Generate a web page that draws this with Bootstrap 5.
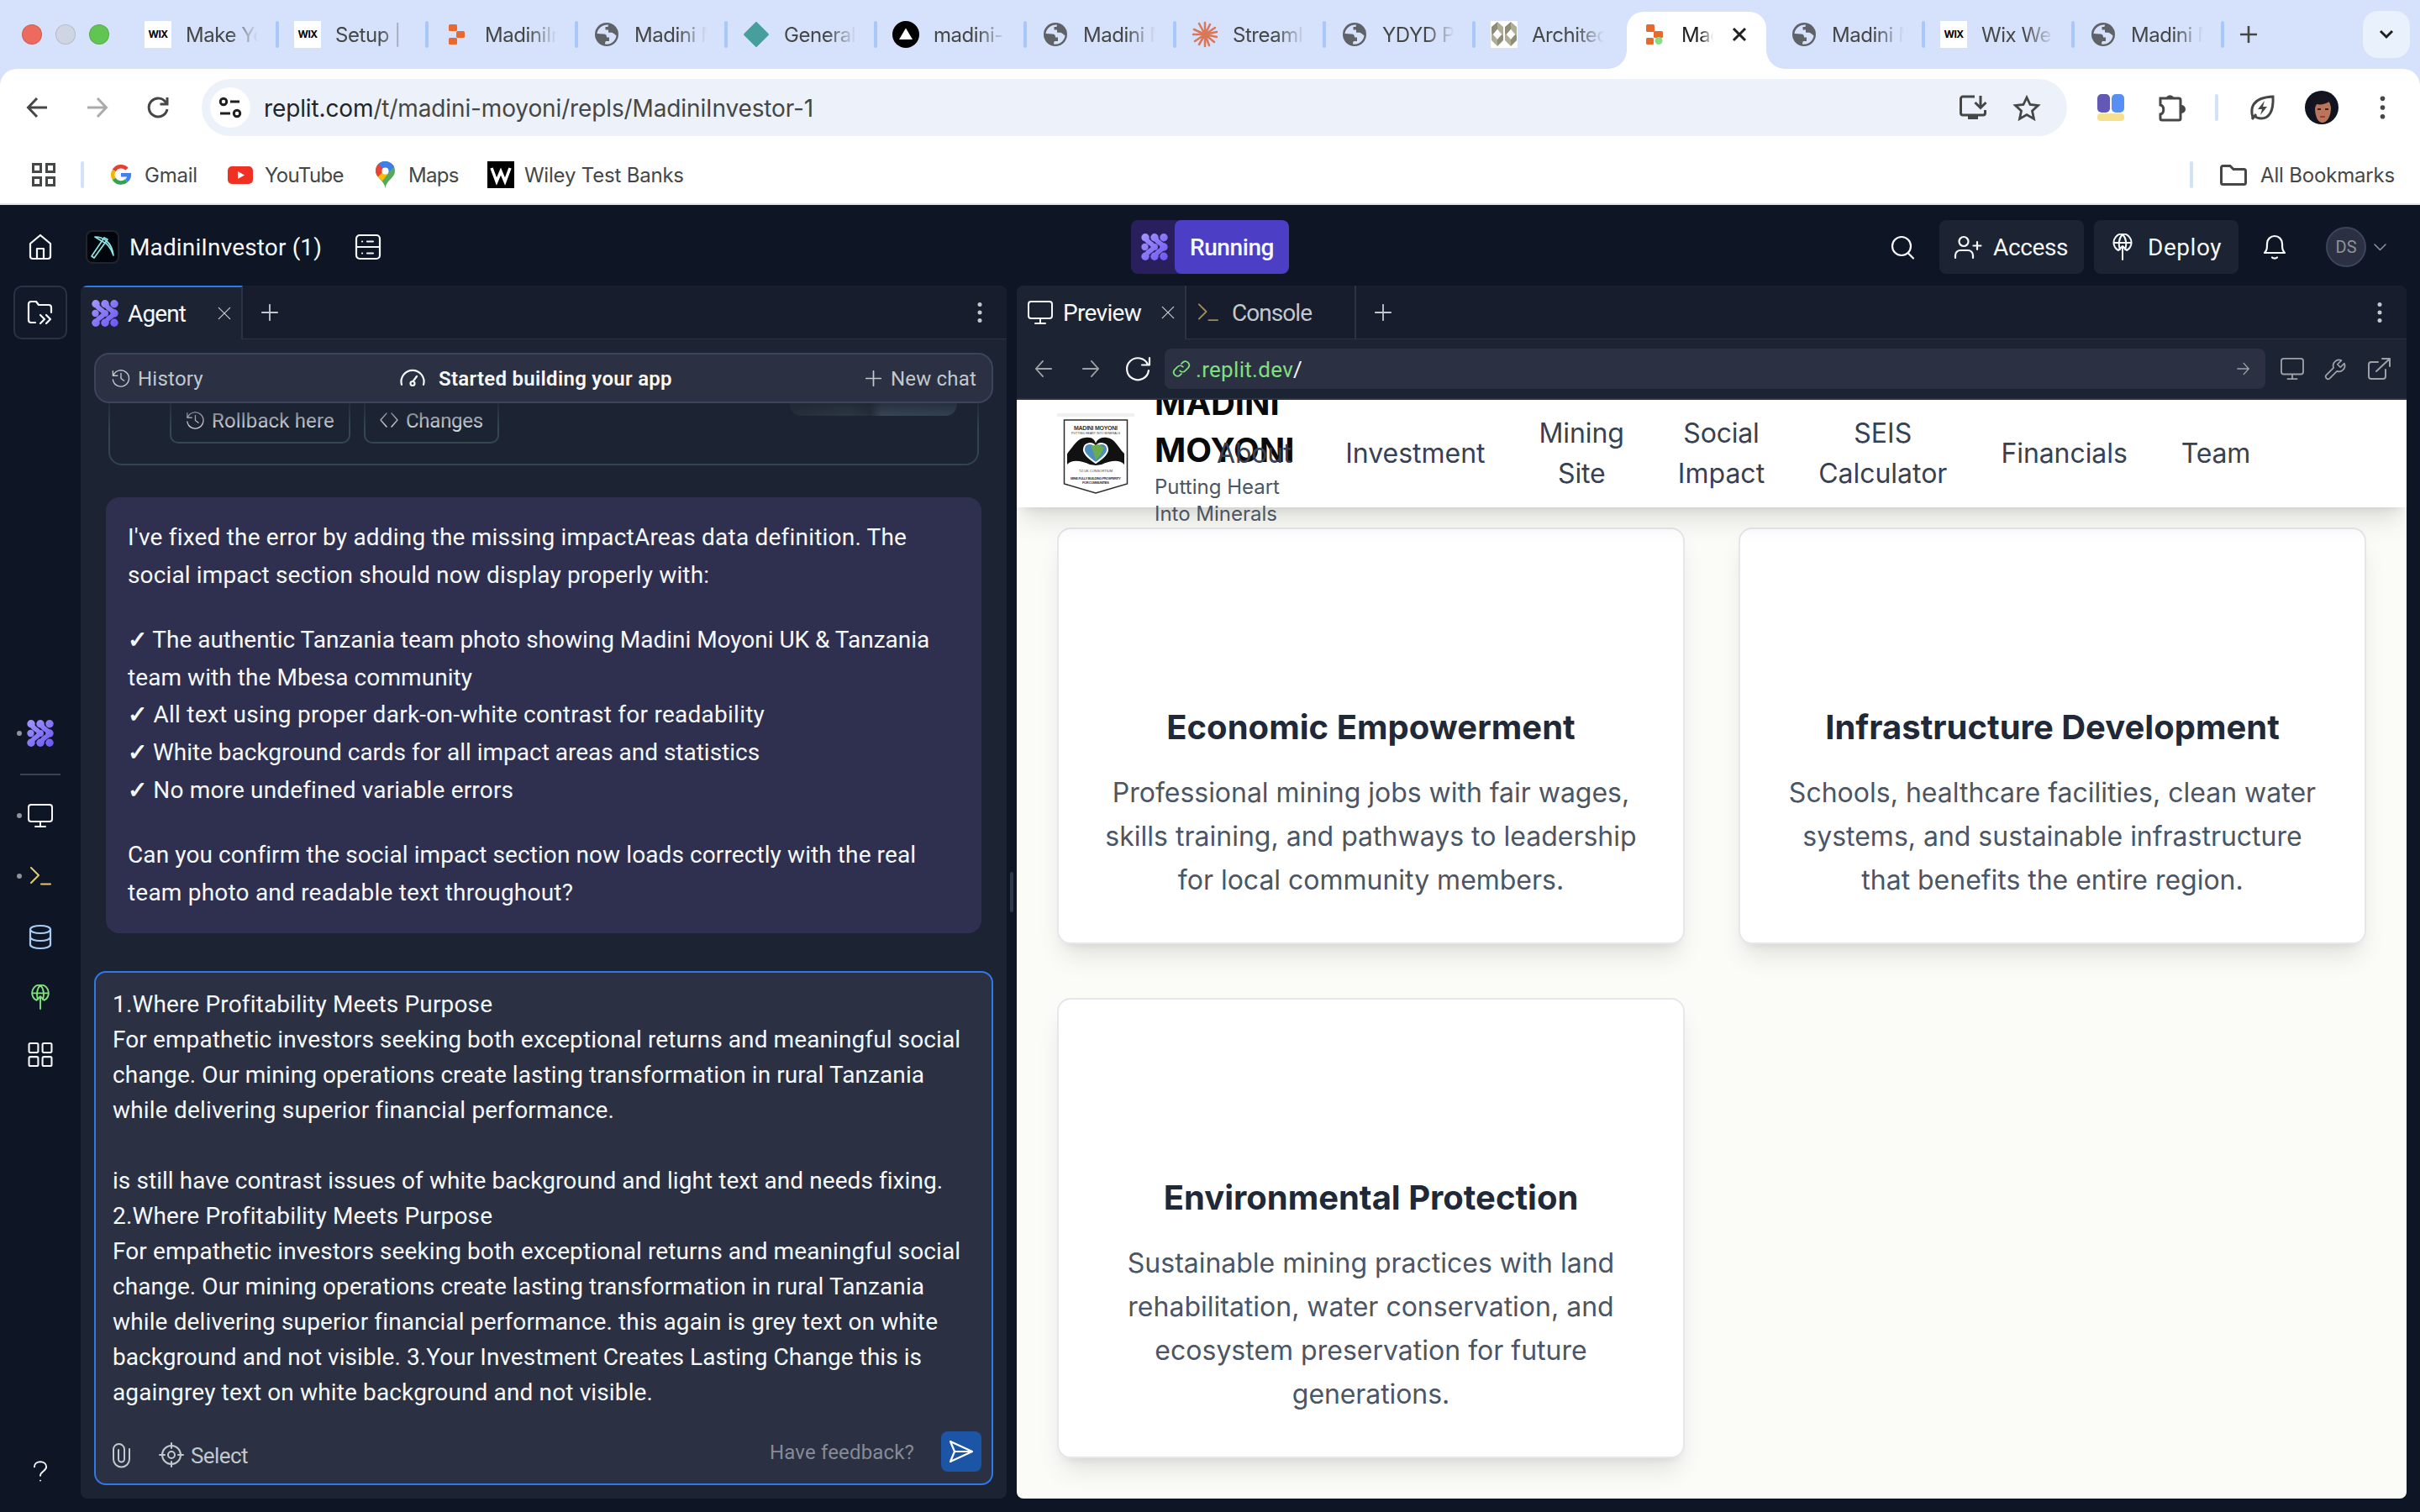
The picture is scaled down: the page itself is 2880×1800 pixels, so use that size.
<!DOCTYPE html>
<html lang="en">
<head>
<meta charset="utf-8">
<title>MadiniInvestor (1) - Replit</title>
<link href="https://cdn.jsdelivr.net/npm/bootstrap@5.3.0/dist/css/bootstrap.min.css" rel="stylesheet">
<script src="https://cdn.jsdelivr.net/npm/bootstrap@5.3.0/dist/js/bootstrap.bundle.min.js"></script>
<style>
:root{--root:#0e1525;--tabs:#171d2d;--pane:#1c2333;--raised:#2b3043;--line:#2b3245;--dim:#9da2a6;--soft:#c2c8cc;--txt:#f5f9fc;--blue:#2e79e5}
html,body{width:2880px;height:1800px;overflow:hidden}
body{background:var(--root);color:var(--txt);font-family:Roboto,"Noto Sans",sans-serif;font-size:28px;line-height:1.5}
svg{display:block;flex:none;overflow:visible}
.ln{fill:none;stroke:currentColor;stroke-width:1.5;stroke-linecap:round;stroke-linejoin:round}
.s2{stroke-width:2}.s22{stroke-width:2.2}
[data-w]{white-space:nowrap;display:inline-block}
.d-flex>[data-w],.btab .ttl{padding-top:2px}
p{margin:0}
/* left-margin steps */
.x6{margin-left:6px}.x9{margin-left:9px}.x11{margin-left:11px}.x12{margin-left:12px}.x14{margin-left:14px}.x16{margin-left:16px}.x17{margin-left:17px}.x18{margin-left:18px}.x20{margin-left:20px}.x22{margin-left:22px}.x24{margin-left:24px}.x30{margin-left:30px}.x32{margin-left:32px}.x34{margin-left:34px}.x36{margin-left:36px}.x38{margin-left:38px}.x40{margin-left:40px}.x42{margin-left:42px}.x48{margin-left:48px}
.tx{color:var(--txt)}.sf{color:var(--soft)}
/* browser chrome */
.chrome-ui{font-family:Inter,sans-serif;font-size:24px;color:#454746;background:#fff}
.strip,.barwrap{background:#d6e2fb}
.strip{height:82px}
.strip .light{width:24px;height:24px;margin-right:16px;border:1px solid rgba(0,0,0,.12)}
.lt-r{background:#ed6a5e}.lt-y{background:#cfd5e2}.lt-g{background:#61c554}
.lights{padding-left:26px;width:156px}
.btab{width:178px;height:82px;padding-left:16px}
.btab .fav{width:32px;height:32px;margin-right:17px}
.btab .ttl{width:86px;margin-right:21px;overflow:hidden;white-space:nowrap;letter-spacing:-.45px;-webkit-mask-image:linear-gradient(90deg,#000 60%,transparent 100%);mask-image:linear-gradient(90deg,#000 60%,transparent 100%)}
.vsep{width:4px;height:32px;border-radius:2px;background:#a8c7fa;flex:none}
.vpale{background:#d3e1fa}
.wixf{background:#fff;color:#000;font-size:12px;font-weight:700;display:flex;align-items:center;justify-content:center;letter-spacing:-.6px}
.btab.on{width:166px;height:68px;margin:14px 0 0;background:#fff;border-radius:20px 20px 0 0;padding:0 0 14px 20px;position:relative;color:#1f1f1f}
.btab.on::before,.btab.on::after{content:"";position:absolute;bottom:0;width:22px;height:22px}
.btab.on::before{left:-22px;background:radial-gradient(circle at 0 0,transparent 21.5px,#fff 22px)}
.btab.on::after{right:-22px;background:radial-gradient(circle at 100% 0,transparent 21.5px,#fff 22px)}
.btab.on .fav{margin-right:13px}.btab.on .ttl{width:38px;margin-right:23px}
.after-on{margin-left:13px}
.menu-btn{width:56px;height:56px;border-radius:18px;background:#e9f1fd;margin-left:auto;margin-right:12px}
.bar{height:92px;background:#fff;border-radius:20px 20px 0 0;padding-left:32px;padding-right:24px}
.omni{width:2220px;height:68px;border-radius:34px;background:#ecf1fa;margin-left:40px;padding:0 32px 0 10px;font-size:28px}
.omni .site{width:48px;height:48px;margin-right:16px}
.navi{gap:48px}
.marks{height:70px;padding:0 30px 0 38px;border-bottom:2px solid #e1e4e1}
.marks .vsep{background:#d3e1fa}
/* workspace */
.top{height:96px;padding-top:4px}
.tbtn{height:64px;width:172px;border-radius:8px;background:var(--pane)}
.ava{width:48px;height:48px;background:var(--raised);border:2px solid #3c445c;font-size:20px;color:#8f949c}
.run-a{width:188px;height:64px;border-radius:8px;background:#281f5c;overflow:hidden;margin-top:2px}
.run-i{width:52px;padding-left:12px}
.run-b{width:136px;border-radius:8px;background:#4c3fc5;font-weight:500}
.rail{width:96px;color:var(--txt)}
.rail .files{width:64px;height:64px;border:2px solid var(--line);border-radius:10px;margin:0 0 433px 16px;background:#121929}
.rail .it{height:72px;position:relative;width:96px}
.rail .it.run::before{content:"";position:absolute;left:20px;top:33px;width:6px;height:6px;border-radius:50%;background:#8f949c}
.rail hr{width:48px;margin:12px 0 12px 24px;border-top:2px solid #3a4154;opacity:1}
.rail .grid-it{height:64px}.rail .help-it{margin-bottom:13px}
.c-yel{color:#e3ca6e}.c-sky{color:#a8cdf5}.c-grn{color:#80e07f}.c-olive{color:#9c8c56}.c-mute{color:#8f949c}
.gutter{width:12px}.gutter i{width:4px;height:48px;border-radius:2px;background:#2f374a;margin-top:698px;margin-left:4px;display:block}
.pane{border-radius:8px;background:var(--pane);overflow:hidden;height:1444px}
.pane-l{width:1102px}.pane-r{width:1654px}
.ptabs{height:64px;background:var(--tabs)}
.ptab{height:64px;width:202px;border-right:2px solid var(--line);border-bottom:1px solid var(--line);color:var(--soft);padding-left:13px}
.ptab.on{background:var(--pane);color:var(--txt);border-bottom:0}
.ptab.focus{width:193px;border-top:2px solid var(--blue)}
.rest{border-bottom:1px solid var(--line);padding:0 28px 0 22px;color:var(--soft)}
.chat{height:1380px;padding:16px}
.hist{height:60px;border:2px solid #3c445c;border-radius:18px;background:var(--raised);font-size:24px;color:var(--soft);position:relative;z-index:2;padding:0 18px}
.gauge{margin-left:234px}
.past{height:74px;margin:0 17px;border:2px solid #2f4550;border-top:0;border-radius:0 0 16px 16px;padding:0 24px 0 71px;position:relative}
.past::after{content:"";position:absolute;left:-4px;right:-4px;top:0;height:30px;background:linear-gradient(#1c2333c0,#1c233300)}
.act{height:48px;border:2px solid #33484f;border-top:0;border-radius:0 0 10px 10px;font-size:24px;color:#d3d8dd;padding:12px 17px 18px;gap:9px}
.act-a{width:215px}.act-b{width:161px}
.thumbpic{width:199px;height:15px;border-radius:0 0 14px 14px;background:linear-gradient(90deg,#2b3440,#36424c 35%,#2a333e 48%,#4a5a68 55%,#3f5160)}
.msg{width:1042px;height:519px;margin:38px 0 0 14px;border-radius:16px;background:#2f3050;padding:26px;line-height:44.85px}
.gap32{margin-top:32px}
.composer{height:612px;margin-top:45px;border:2px solid var(--blue);border-radius:14px;background:var(--raised);padding:17px 12px 16px 20px;line-height:42px}
.draft{min-height:504px;margin-bottom:23px}
.tools{margin-top:8px}
.tools-sel{font-size:26px}.fb{font-size:24px;color:#868b96}
.send{width:48px;height:48px;border-radius:8px;background:#1c55a5;color:#fff}
.urlbar{height:72px;border-bottom:2px solid var(--line);color:var(--dim);padding-left:20px}
.urlf{width:1310px;height:48px;border-radius:8px;background:var(--raised);padding:0 18px 0 9px;font-size:26px}
.slash{padding-top:2px}
/* previewed site */
.site-view{height:1308px;background:#fbfcf8;font-family:Inter,sans-serif;overflow:hidden}
.site-head{height:128px;background:#fff;padding-left:48px;position:relative;z-index:2;box-shadow:0 20px 30px -6px rgba(0,0,0,.12),0 8px 12px -8px rgba(0,0,0,.12)}
.brandbox{width:190px;flex:none;gap:24px}
.brandname{font-weight:700;font-size:40px;line-height:56px;color:#0a0a0a}
.tagline{font-size:24px;line-height:32px;color:#4b5563}
.sitenav{gap:64px;font-size:32px;line-height:48px;color:#374151;text-align:center;position:relative}
.sitenav>[data-w]{padding-top:0}
.cards{padding:24px 48px;gap:64px;display:grid;grid-template-columns:1fr 1fr}
.pcard{border:2px solid #e5e7eb;border-radius:16px;background:#fff;padding:48px 40px;text-align:center;box-shadow:0 20px 30px -6px rgba(0,0,0,.1),0 8px 12px -8px rgba(0,0,0,.1)}
.pcard .slot{height:128px;margin-bottom:32px}
.pcard h3{font-size:40px;line-height:56px;font-weight:700;color:#1f2937;margin:0 0 24px}
.pcard p{font-size:32px;line-height:52px;color:#4b5563}
</style>
</head>
<body class="d-flex flex-column">
<svg width="0" height="0" class="position-absolute" aria-hidden="true">
<defs>
<linearGradient id="vio" gradientUnits="userSpaceOnUse" x1="0" y1="0" x2="32" y2="32"><stop offset="0" stop-color="#a597ff"/><stop offset="1" stop-color="#6a55f0"/></linearGradient>
<symbol id="globe" viewBox="0 0 32 32"><circle cx="16" cy="16" r="14" fill="#5f6368"/><path d="M18 4.5C11 4 5.500 8.500 4.500 15l8 .5c2.500 0 3.500 1.500 3.500 4h3v4.500h-4c-1 1.500-1 2.500-1 3.500 7 1 12.500-3.500 13.500-10l-4-4h-5v-3h-4V7h3z" fill="#d6e2fb"/><path d="M21 5.500v4h-3v4h4l5 3c.5-5-2-9-6-11zM13 18H4.500c.5 4 3.500 8 8 9.300V23l3-1.500z" fill="#5f6368"/></symbol>
<symbol id="replit" viewBox="0 0 32 32"><g fill="#e8692b"><rect x="6" y="4" width="10" height="8" rx="1.500"/><rect x="15" y="12" width="10" height="8" rx="1.500"/><rect x="6" y="20" width="10" height="8" rx="1.500"/></g></symbol>
<symbol id="agent" viewBox="0 0 32 32"><g fill="url(#vio)"><circle cx="5" cy="4.800" r="4.700"/><circle cx="16" cy="4.800" r="4.700"/><circle cx="27" cy="4.800" r="4.700"/><circle cx="4.500" cy="16" r="4.200"/><circle cx="16" cy="16" r="4"/><circle cx="27" cy="16" r="4.700"/><circle cx="5" cy="27.200" r="4.700"/><circle cx="16" cy="27.200" r="4.700"/><circle cx="27" cy="27.200" r="4.700"/></g><g fill="none" stroke="url(#vio)" stroke-width="5.600"><path d="M6 6C8 12 14.500 11.500 14.500 16S8 20 6 26M17.500 6C19.500 12 26 11.500 26 16s-6.500 4-8.500 10"/></g></symbol>
<symbol id="close" viewBox="0 0 24 24"><path class="ln" d="M4 4l16 16M20 4L4 20"/></symbol>
<symbol id="plus" viewBox="0 0 24 24"><path class="ln s22" d="M12 1v22M1 12h22"/></symbol>
<symbol id="left" viewBox="0 0 24 24"><path class="ln s2" d="M22 12H2M11 2L2 12l9 10"/></symbol>
<symbol id="right" viewBox="0 0 24 24"><path class="ln s2" d="M2 12h20M13 2l9 10-9 10"/></symbol>
<symbol id="kebab" viewBox="0 0 8 24"><g fill="currentColor"><circle cx="4" cy="2.500" r="2.500"/><circle cx="4" cy="12" r="2.500"/><circle cx="4" cy="21.500" r="2.500"/></g></symbol>
<symbol id="monitor" viewBox="0 0 30 28"><path class="ln s2" d="M4 1h22a3 3 0 0 1 3 3v14a3 3 0 0 1-3 3H4a3 3 0 0 1-3-3V4a3 3 0 0 1 3-3zM15 21v6M9 27h12"/></symbol>
<symbol id="prompt" viewBox="0 0 26 22"><path class="ln s2" d="M2 1l9 9-9 9M14 20.500h11"/></symbol>
<symbol id="history" viewBox="0 0 24 24"><path class="ln" d="M2 3v6h6M2.500 9A10.500 10.500 0 1 1 2 14M12.500 6v6.500l4 3"/></symbol>
<symbol id="deploy" viewBox="0 0 24 32"><path class="ln s2" d="M7 20A10.500 10.500 0 1 1 17 20M2 11h20M12 1c-5 5-5 13-3 18M12 1c5 5 5 13 3 18M12 31V15M7 20l5-5 5 5"/></symbol>
<symbol id="fourbox" viewBox="0 0 28 28"><g class="ln s2"><rect x="1" y="1" width="10.500" height="10.500" rx="1.500"/><rect x="16.500" y="1" width="10.500" height="10.500" rx="1.500"/><rect x="1" y="16.500" width="10.500" height="10.500" rx="1.500"/><rect x="16.500" y="16.500" width="10.500" height="10.500" rx="1.500"/></g></symbol>
</defs>
</svg>

<header class="chrome-ui">
  <div class="strip d-flex align-items-center">
    <div class="lights d-flex"><span class="light lt-r rounded-circle"></span><span class="light lt-y rounded-circle"></span><span class="light lt-g rounded-circle"></span></div>
    <div class="btab d-flex align-items-center"><span class="fav wixf">WIX</span><span class="ttl">Make Yo</span><i class="vsep"></i></div>
    <div class="btab d-flex align-items-center"><span class="fav wixf">WIX</span><span class="ttl">Setup | </span><i class="vsep"></i></div>
    <div class="btab d-flex align-items-center"><svg class="fav"><use href="#replit"/></svg><span class="ttl">MadiniIn</span><i class="vsep"></i></div>
    <div class="btab d-flex align-items-center"><svg class="fav"><use href="#globe"/></svg><span class="ttl">Madini M</span><i class="vsep"></i></div>
    <div class="btab d-flex align-items-center"><svg class="fav" viewBox="0 0 32 32"><path d="M16 2l14 14-14 14L2 16z" fill="#479f9c" stroke="#479f9c" stroke-width="2" stroke-linejoin="round"/></svg><span class="ttl">General</span><i class="vsep"></i></div>
    <div class="btab d-flex align-items-center"><svg class="fav" viewBox="0 0 32 32"><circle cx="16" cy="16" r="16"/><path d="M16 8.500l8 13.500H8z" fill="#fff"/></svg><span class="ttl">madini-</span><i class="vsep"></i></div>
    <div class="btab d-flex align-items-center"><svg class="fav"><use href="#globe"/></svg><span class="ttl">Madini M</span><i class="vsep"></i></div>
    <div class="btab d-flex align-items-center"><svg class="fav" viewBox="0 0 32 32"><g stroke="#d97757" stroke-width="2.500" stroke-linecap="round"><path d="M16 16V2M16 16l6-12M16 16l12-8M16 16l14-3M16 16l14 3M16 16l11 9M16 16l5 13M16 16v14M16 16L9 28M16 16L4 24M16 16H2M16 16L3 10M16 16L9 3"/></g></svg><span class="ttl">Streaml</span><i class="vsep"></i></div>
    <div class="btab d-flex align-items-center"><svg class="fav"><use href="#globe"/></svg><span class="ttl">YDYD P</span><i class="vsep"></i></div>
    <div class="btab d-flex align-items-center"><svg class="fav" viewBox="0 0 32 32"><path fill="#fff" d="M0 0h32v32H0z"/><path d="M1 7l7-6v9l-7 8zM17 7l7-6v9l-7 8zM15 23l-7 7v-9l7-7zM31 23l-7 7v-9l7-7z" fill="#8e8e78"/><path d="M15 7L8 1v9l7 8zM31 7l-7-6v9l7 8zM1 23l7 7v-9l-7-7zM17 23l7 7v-9l-7-7z" fill="#aeae98"/><path d="M8 10l5 6-5 6-5-6zM24 10l5 6-5 6-5-6z" fill="#fff"/></svg><span class="ttl">Architec</span></div>
    <div class="btab on d-flex align-items-center"><svg class="fav" viewBox="0 0 32 32"><g fill="#e8692b"><rect x="3" y="4" width="10" height="9" rx="1.500"/><rect x="12" y="12" width="11" height="8" rx="1.500"/><rect x="3" y="20" width="9" height="8" rx="1.500"/></g><circle cx="18" cy="23.500" r="4.500" fill="#86dd8c"/></svg><span class="ttl">Mad</span><svg width="16" height="16"><path d="M1 1l14 14M15 1L1 15" stroke="#1f1f1f" stroke-width="3" fill="none"/></svg></div>
    <div class="btab after-on d-flex align-items-center"><svg class="fav"><use href="#globe"/></svg><span class="ttl">Madini M</span><i class="vsep"></i></div>
    <div class="btab d-flex align-items-center"><span class="fav wixf">WIX</span><span class="ttl">Wix We</span><i class="vsep"></i></div>
    <div class="btab d-flex align-items-center"><svg class="fav"><use href="#globe"/></svg><span class="ttl">Madini M</span><i class="vsep"></i></div>
    <svg class="x17" width="20" height="20" viewBox="0 0 20 20"><path d="M10 0v20M0 10h20" stroke="#454746" stroke-width="2.600"/></svg>
    <div class="menu-btn d-flex align-items-center justify-content-center"><svg width="16" height="10" viewBox="0 0 16 10"><path d="M1 1l7 7 7-7" fill="none" stroke="#1f1f1f" stroke-width="3"/></svg></div>
  </div>
  <div class="barwrap">
  <div class="bar d-flex align-items-center">
    <div class="navi d-flex align-items-center">
      <svg width="24" height="24" viewBox="0 0 24 24"><path d="M24 12H2M12 1L1.500 12 12 23" fill="none" stroke="#454746" stroke-width="3"/></svg>
      <svg width="24" height="24" viewBox="0 0 24 24"><path d="M0 12h22M12 1l10.500 11L12 23" fill="none" stroke="#aaabab" stroke-width="3"/></svg>
      <svg width="24" height="24" viewBox="0 0 24 24"><path d="M22 7A11 11 0 1 0 23 14M23 0v8h-8.500" fill="none" stroke="#454746" stroke-width="3"/></svg>
    </div>
    <div class="omni d-flex align-items-center">
      <span class="site bg-white rounded-circle d-flex align-items-center justify-content-center"><svg width="26" height="24" viewBox="0 0 26 24"><g fill="none" stroke="#1f1f1f" stroke-width="3"><circle cx="5" cy="5" r="3.700"/><path d="M13 5h11M1 19h12"/><circle cx="21" cy="19" r="3.700"/></g></svg></span>
      <span data-w="653"><span class="text-dark">replit.com</span>/t/madini-moyoni/repls/MadiniInvestor-1</span>
      <svg class="ms-auto" width="32" height="30" viewBox="0 0 32 30"><path d="M18 2H4a2.500 2.500 0 0 0-2.500 2.500v17A2.500 2.500 0 0 0 4 24h24a2.500 2.500 0 0 0 2.500-2.500V18M25 1v14M18.500 9l6.500 6.500L31.500 9" fill="none" stroke="#454746" stroke-width="3"/><path d="M10 24h12v5H10z" fill="#454746"/></svg>
      <svg class="x32" width="32" height="30" viewBox="0 0 32 30"><path d="M16 3l4 8.500 9.500 1-7 6.500 2 9.500L16 23.500 7.500 28.500l2-9.500-7-6.500 9.500-1z" fill="none" stroke="#454746" stroke-width="2.800"/></svg>
    </div>
    <svg class="x36" width="32" height="32" viewBox="0 0 32 32"><rect width="15" height="22" rx="5" fill="#6258b5"/><rect x="17" width="15" height="22" rx="5" fill="#5690f5"/><rect y="23" width="32" height="9" rx="4" fill="#f7e08d"/></svg>
    <svg class="x40" width="34" height="34" viewBox="0 0 34 34"><path d="M3 6h22a2 2 0 0 1 2 2v22a2 2 0 0 1-2 2H5a2 2 0 0 1-2-2v-5c5-1 5-10 0-11z" fill="none" stroke="#454746" stroke-width="3"/><path d="M10 5a5 5 0 0 1 9 0zM28 14a5 5 0 0 1 0 10z" fill="#454746"/></svg>
    <i class="vsep vpale x34"></i>
    <svg class="x38" width="29" height="30" viewBox="0 0 29 30"><path d="M3 27C0 17 1 3 27 2c1 18-5 26-14 26-3 0-6-1-8-3M2 29l5-6" fill="none" stroke="#454746" stroke-width="3"/><path d="M17 7l-8 10h5l-2 7 8-10h-5z" fill="#454746"/></svg>
    <svg class="x36" width="40" height="40" viewBox="0 0 40 40"><circle cx="20" cy="20" r="20" fill="#101420"/><path d="M12 20c0-8 4-11 9-11s10 4 10 12-4 17-10 17-9-8-9-18z" fill="#b9765c"/><path d="M9 27C7 8 14 4 21 4s13 5 12 20c-2-3-2-7-4-11-5 3-10 4-15 3-2 3-2 7-5 11z" fill="#16141c"/><path d="M15 22h4M24 22h4" stroke="#3a1e1a" stroke-width="2"/><path d="M18 31h6" stroke="#9b3f3d" stroke-width="2"/></svg>
    <svg class="x48" width="9" height="28"><use href="#kebab"/></svg>
  </div>
  </div>
  <div class="marks d-flex align-items-center">
    <svg width="28" height="28" viewBox="0 0 28 28"><path d="M1.500 1.500h9v9h-9zM17.500 1.500h9v9h-9zM1.500 17.500h9v9h-9zM17.500 17.500h9v9h-9z" fill="none" stroke="#454746" stroke-width="3"/></svg>
    <i class="vsep x30"></i>
    <svg class="x32" width="24" height="24" viewBox="0 0 24 24"><g fill="none" stroke-width="4.500"><path d="M3.700 7A9.700 9.700 0 0 1 19 5.200" stroke="#e34133"/><path d="M3.700 17a9.700 9.700 0 0 1 0-10" stroke="#f3b605"/><path d="M18.500 19A9.700 9.700 0 0 1 3.700 17" stroke="#32a350"/><path d="M12 12.200h9.800c0 3-1.300 5.300-3.300 6.800" stroke="#4280ef"/></g></svg>
    <span class="x16" data-w="62">Gmail</span>
    <svg class="x36" width="30" height="21" viewBox="0 0 30 21"><rect width="30" height="21" rx="5" fill="#f03022"/><path d="M12 6l8 4.500-8 4.500z" fill="#fff"/></svg>
    <span class="x14" data-w="93">YouTube</span>
    <svg class="x38" width="23" height="32" viewBox="0 0 23 32"><path d="M0 11.500A11.500 11.500 0 0 1 23 11.500C23 20 13 22 11.500 32 10 22 0 20 0 11.500z" fill="#57a95a"/><path d="M0 11.500C0 7 2 4 4 2.500l7 6L3 18.500C1 16 0 14 0 11.500z" fill="#ea4335"/><path d="M3 18.500l8-8 4 4-7 9z" fill="#fbbc04"/><path d="M3.500 3a11.500 11.500 0 0 1 18.500 4l-9 8z" fill="#3f7de8"/><circle cx="11.500" cy="11.500" r="4" fill="#fff"/></svg>
    <span class="x16" data-w="59">Maps</span>
    <svg class="x34" width="32" height="32" viewBox="0 0 32 32"><path d="M0 0h32v32H0z"/><path d="M5 8l6 16 5-12 5 12 6-16" fill="none" stroke="#fff" stroke-width="3.500"/></svg>
    <span class="x12" data-w="189">Wiley Test Banks</span>
    <i class="vsep ms-auto"></i>
    <svg class="x32" width="32" height="25" viewBox="0 0 32 25"><path d="M1.500 3.500a2 2 0 0 1 2-2H12l4 4h12.500a2 2 0 0 1 2 2v14a2 2 0 0 1-2 2h-25a2 2 0 0 1-2-2z" fill="none" stroke="#454746" stroke-width="3"/></svg>
    <span class="x16" data-w="159">All Bookmarks</span>
  </div>
</header>

<div class="top d-flex align-items-center position-relative">
  <svg class="x34" width="28" height="30" viewBox="0 0 28 30"><path class="ln s22" d="M2 11L14 1l12 10v15a3 3 0 0 1-3 3H5a3 3 0 0 1-3-3zM10 29V17h8v12"/></svg>
  <svg class="x40" width="40" height="40" viewBox="0 0 40 40"><rect x="1" y="1" width="38" height="38" rx="7" fill="#02060c" stroke="#20242c" stroke-width="2"/><g fill="none" stroke="#8ee8e4" stroke-width="1.700" stroke-linejoin="round"><path d="M11 8c10 0 20 6 22 22-3-9-8-15-14-17z"/><path d="M26 11L10 33l-3-2 15-22z"/></g></svg>
  <span class="x12" data-w="228">MadiniInvestor (1)</span>
  <svg class="x40" width="30" height="30" viewBox="0 0 30 30"><g class="ln s22"><rect x="1" y="1" width="28" height="28" rx="4"/><path d="M1 15h28M14 8.500h7M14 22.500h7M8 8.500h.1M8 22.500h.1"/></g></svg>
  <div class="d-flex align-items-center ms-auto pe-4">
    <svg width="27" height="27" viewBox="0 0 27 27"><path class="ln s22" d="M19.500 20L26 26.500M12 1a11 11 0 1 1 0 22 11 11 0 0 1 0-22z"/></svg>
    <div class="tbtn x30 d-flex align-items-center"><svg class="x18" width="32" height="27" viewBox="0 0 32 27"><path class="ln s22" d="M11 1a5.500 5.500 0 1 1 0 11 5.500 5.500 0 0 1 0-11zM1 26v-3a6 6 0 0 1 6-6h9a6 6 0 0 1 6 6v3M27 7v9M22.500 11.500h9"/></svg><span class="x14" data-w="88">Access</span></div>
    <div class="tbtn x12 d-flex align-items-center"><svg class="x22" width="24" height="32"><use href="#deploy"/></svg><span class="x18" data-w="87">Deploy</span></div>
    <svg class="x30" width="26" height="30" viewBox="0 0 26 30"><path class="ln s22" d="M1 22c3-3 3-6 3-11a9 9 0 0 1 18 0c0 5 0 8 3 11zM10 27.500c1.500 1.500 4.500 1.500 6 0"/></svg>
    <span class="ava x48 rounded-circle d-flex align-items-center justify-content-center">DS</span>
    <svg class="x9 c-mute me-3" width="15" height="9" viewBox="0 0 15 9"><path class="ln" d="M1 1l6.500 6.500L14 1"/></svg>
  </div>
  <div class="run-a d-flex position-absolute top-50 start-50 translate-middle"><span class="run-i d-flex align-items-center"><svg width="32" height="32"><use href="#agent"/></svg></span><span class="run-b d-flex align-items-center justify-content-center"><span data-w="99">Running</span></span></div>
</div>

<main class="d-flex flex-grow-1">
  <nav class="rail d-flex flex-column">
    <div class="files d-flex align-items-center justify-content-center"><svg width="30" height="28" viewBox="0 0 30 28"><path class="ln s22" d="M9 26H4a3 3 0 0 1-3-3V4a3 3 0 0 1 3-3h6l3 4h12a3 3 0 0 1 3 3v6M15 17l5 5-5 5M22 17l5 5-5 5"/></svg></div>
    <div class="it run d-flex align-items-center justify-content-center"><svg width="32" height="32"><use href="#agent"/></svg></div>
    <hr>
    <div class="it run d-flex align-items-center justify-content-center"><svg width="30" height="28"><use href="#monitor"/></svg></div>
    <div class="it run c-yel d-flex align-items-center justify-content-center"><svg width="26" height="22"><use href="#prompt"/></svg></div>
    <div class="it c-sky d-flex align-items-center justify-content-center"><svg width="26" height="29" viewBox="0 0 26 29"><path class="ln s22" d="M13 1c7 0 12 2 12 4.500S20 10 13 10 1 8 1 5.500 6 1 13 1zM1 5.500v18C1 26 6 28 13 28s12-2 12-4.500v-18M1 14.500C1 17 6 19 13 19s12-2 12-4.500"/></svg></div>
    <div class="it c-grn d-flex align-items-center justify-content-center"><svg width="24" height="30"><use href="#deploy"/></svg></div>
    <div class="it grid-it d-flex align-items-center justify-content-center"><svg width="30" height="29"><use href="#fourbox"/></svg></div>
    <div class="it help-it mt-auto d-flex align-items-center justify-content-center"><svg width="16" height="27" viewBox="0 0 18 28"><path class="ln s22" d="M1 8c0-9 16-9 16 0 0 6-8 6-8 12M9 26.500h.1"/></svg></div>
  </nav>

  <section class="pane pane-l d-flex flex-column">
    <div class="ptabs d-flex">
      <div class="ptab on focus d-flex align-items-center"><svg width="32" height="32"><use href="#agent"/></svg><span class="x11" data-w="68">Agent</span><svg class="x36 sf" width="20" height="20"><use href="#close"/></svg></div>
      <div class="rest flex-grow-1 d-flex align-items-center"><svg width="20" height="20"><use href="#plus"/></svg><svg class="ms-auto" width="8" height="24"><use href="#kebab"/></svg></div>
    </div>
    <div class="chat d-flex flex-column">
      <div class="hist d-flex align-items-center">
        <svg width="23" height="22"><use href="#history"/></svg><span class="x9" data-w="77">History</span>
        <svg class="gauge tx" width="30" height="20" viewBox="0 0 30 20"><path class="ln s22" d="M2 18a13.500 13.500 0 1 1 26 0M15.500 14L20 8M15 14a2.500 2.500 0 1 1 0 5 2.500 2.500 0 0 1 0-5z"/></svg>
        <span class="x16 tx fw-semibold" data-w="277">Started building your app</span>
        <svg class="ms-auto" width="19" height="19"><use href="#plus"/></svg><span class="x11" data-w="101">New chat</span>
      </div>
      <div class="past d-flex align-items-start">
        <span class="act act-a d-flex align-items-center"><svg width="22" height="22"><use href="#history"/></svg><span data-w="145">Rollback here</span></span>
        <span class="act act-b x16 d-flex align-items-center"><svg width="22" height="18" viewBox="0 0 22 18"><path class="ln" d="M8 1L1 9l7 8M14 1l7 8-7 8"/></svg><span data-w="91">Changes</span></span>
        <span class="thumbpic ms-auto"></span>
      </div>
      <div class="msg">
        <p><span data-w="924">I've fixed the error by adding the missing impactAreas data definition. The</span><br><span data-w="691">social impact section should now display properly with:</span></p>
        <p class="gap32"><span data-w="953"><b>✓</b> The authentic Tanzania team photo showing Madini Moyoni UK &amp; Tanzania</span><br><span data-w="409">team with the Mbesa community</span><br><span data-w="757"><b>✓</b> All text using proper dark-on-white contrast for readability</span><br><span data-w="751"><b>✓</b> White background cards for all impact areas and statistics</span><br><span data-w="457"><b>✓</b> No more undefined variable errors</span></p>
        <p class="gap32"><span data-w="936">Can you confirm the social impact section now loads correctly with the real</span><br><span data-w="529">team photo and readable text throughout?</span></p>
      </div>
      <div class="composer">
        <p class="draft"><span data-w="450">1.Where Profitability Meets Purpose</span><br><span data-w="1008">For empathetic investors seeking both exceptional returns and meaningful social</span><br><span data-w="965">change. Our mining operations create lasting transformation in rural Tanzania</span><br><span data-w="595">while delivering superior financial performance.</span><br><br><span data-w="986">is still have contrast issues of white background and light text and needs fixing.</span><br><span data-w="450">2.Where Profitability Meets Purpose</span><br><span data-w="1008">For empathetic investors seeking both exceptional returns and meaningful social</span><br><span data-w="965">change. Our mining operations create lasting transformation in rural Tanzania</span><br><span data-w="980">while delivering superior financial performance. this again is grey text on white</span><br><span data-w="962">background and not visible. 3.Your Investment Creates Lasting Change this is</span><br><span data-w="642">againgrey text on white background and not visible.</span></p>
        <div class="d-flex align-items-center sf">
          <div class="tools d-flex align-items-center">
            <svg width="22" height="28" viewBox="0 0 22 28"><path class="ln s2" d="M20 7v12a9.500 9.500 0 0 1-19 0V7.500a6.500 6.500 0 0 1 13 0V19a3.500 3.500 0 0 1-7 0V8"/></svg>
            <svg class="x34" width="28" height="28" viewBox="0 0 28 28"><g class="ln s2"><circle cx="14" cy="14" r="11"/><circle cx="14" cy="14" r="4"/><path d="M14 0v6M14 22v6M0 14h6M22 14h6"/></g></svg>
            <span class="x9 tools-sel" data-w="67">Select</span>
          </div>
          <span class="ms-auto fb" data-w="171">Have feedback?</span>
          <span class="send x32 d-flex align-items-center justify-content-center"><svg width="28" height="26" viewBox="0 0 28 26"><path class="ln s22" d="M1 1l26 12L1 25l5-12zM6 13h20"/></svg></span>
        </div>
      </div>
    </div>
  </section>

  <div class="gutter"><i></i></div>

  <section class="pane pane-r d-flex flex-column">
    <div class="ptabs d-flex">
      <div class="ptab on d-flex align-items-center"><svg width="30" height="28"><use href="#monitor"/></svg><span class="x12" data-w="92">Preview</span><svg class="x22 sf" width="20" height="20"><use href="#close"/></svg></div>
      <div class="ptab d-flex align-items-center"><svg class="c-olive" width="25" height="22"><use href="#prompt"/></svg><span class="x16" data-w="94">Console</span></div>
      <div class="rest flex-grow-1 d-flex align-items-center"><svg width="20" height="20"><use href="#plus"/></svg><svg class="ms-auto" width="8" height="24"><use href="#kebab"/></svg></div>
    </div>
    <div class="urlbar d-flex align-items-center">
      <svg width="24" height="22"><use href="#left"/></svg>
      <svg class="x32" width="24" height="22"><use href="#right"/></svg>
      <svg class="x30 tx" width="29" height="28" viewBox="0 0 29 28"><path class="ln s22" d="M26 9A13 13 0 1 0 27 16M28 1v8.500h-9"/></svg>
      <div class="urlf x17 d-flex align-items-center"><svg class="c-grn" width="22" height="22" viewBox="0 0 24 24"><path class="ln s2" d="M10 14.500a5 5 0 0 0 7 0l4-4a5 5 0 0 0-7-7l-2 2M14 9.500a5 5 0 0 0-7 0l-4 4a5 5 0 0 0 7 7l2-2"/></svg><span class="x6 c-grn" data-w="115">.replit.dev</span><span class="tx slash">/</span><svg class="ms-auto" width="17" height="16"><use href="#right"/></svg></div>
      <svg class="x18" width="28" height="26"><use href="#monitor"/></svg>
      <svg class="x24" width="28" height="28" viewBox="0 0 24 24"><path class="ln" d="M20.500 6.500l-4 4-3-3 4-4a6 6 0 0 0-8 7.500L2 18.500A2.500 2.500 0 0 0 5.500 22l7.500-7.500a6 6 0 0 0 7.500-8z"/></svg>
      <svg class="x24" width="27" height="26" viewBox="0 0 27 26"><path class="ln s2" d="M12 5H4a3 3 0 0 0-3 3v14a3 3 0 0 0 3 3h14a3 3 0 0 0 3-3v-8M17 1h9v9M26 1L10 16"/></svg>
    </div>
    <div class="site-view">
      <div class="site-head d-flex align-items-center">
        <div class="brandbox d-flex align-items-center">
          <svg width="92" height="96" viewBox="0 0 92 96"><path d="M0 0h92v4H0z" fill="#f0f0f0"/><path d="M8.500 8h75v76L46 95 8.500 84z" fill="#fff" stroke="#2a2a2a" stroke-width="1.500"/><path d="M12 61V48C20 39 24 29 34 29c8-1 11 3 12 7 1-4 6-8 13-7 10 1 13 11 21 19v13c-6-7-18-4-27 0l-7 1-7-1c-9-4-21-7-27 0z" fill="#111"/><path d="M46 59C36 52 31 47 32 42c1-7 10-8 14-2 4-6 13-5 14 2 1 5-4 10-14 17z" fill="#4a8fc0" stroke="#fff" stroke-width="2"/><path d="M40 39l9-2 7 4-4 8-6 7-2-8z" fill="#6dab4d"/><g font-family="Liberation Sans" text-anchor="middle" fill="#333"><text x="46" y="20" font-size="7" font-weight="700" textLength="52">MADINI MOYONI</text><text x="46" y="25" font-size="3.500" textLength="58">PUTTING HEART INTO MINERALS</text><text x="46" y="70" font-size="4" textLength="40">TZ-UK CONSORTIUM</text><text x="46" y="79" font-size="4" font-weight="700" textLength="60">MINE-FULLY BUILDING PROSPERITY</text><text x="46" y="84" font-size="4" font-weight="700" textLength="32">FOR COMMUNITIES</text></g></svg>
          <div><div class="brandname"><span data-w="147">MADINI</span><br><span data-w="165">MOYONI</span></div><div class="tagline"><span data-w="148">Putting Heart</span><br><span data-w="145">Into Minerals</span></div></div>
        </div>
        <div class="sitenav d-flex align-items-center"><span data-w="88">About</span><span data-w="165">Investment</span><span><span data-w="100">Mining</span><br><span data-w="55">Site</span></span><span><span data-w="89">Social</span><br><span data-w="102">Impact</span></span><span><span data-w="68">SEIS</span><br><span data-w="152">Calculator</span></span><span data-w="149">Financials</span><span data-w="81">Team</span></div>
      </div>
      <div class="cards">
        <div class="pcard"><div class="slot"></div><h3><span data-w="485">Economic Empowerment</span></h3><p><span data-w="614">Professional mining jobs with fair wages,</span><br><span data-w="631">skills training, and pathways to leadership</span><br><span data-w="458">for local community members.</span></p></div>
        <div class="pcard"><div class="slot"></div><h3><span data-w="539">Infrastructure Development</span></h3><p><span data-w="626">Schools, healthcare facilities, clean water</span><br><span data-w="593">systems, and sustainable infrastructure</span><br><span data-w="453">that benefits the entire region.</span></p></div>
        <div class="pcard"><div class="slot"></div><h3><span data-w="492">Environmental Protection</span></h3><p><span data-w="578">Sustainable mining practices with land</span><br><span data-w="577">rehabilitation, water conservation, and</span><br><span data-w="513">ecosystem preservation for future</span><br><span data-w="186">generations.</span></p></div>
      </div>
    </div>
  </section>
</main>
<script>
// Tracks each line of text so it fills its measured width whatever font is installed.
document.querySelectorAll('[data-w]').forEach(function (el) {
  var size = parseFloat(getComputedStyle(el).fontSize);
  var want = +el.dataset.w + size * 0.04;
  var gap = (want - el.getBoundingClientRect().width) / el.textContent.length;
  el.style.letterSpacing = gap.toFixed(3) + 'px';
});
</script>
</body>
</html>
